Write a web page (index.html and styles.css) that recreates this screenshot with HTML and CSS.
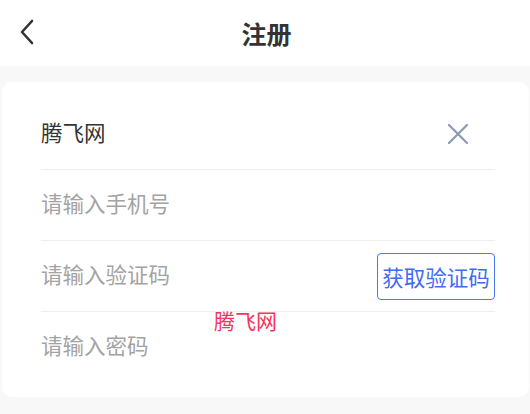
FILE: index.html
```html
<!DOCTYPE html>
<html lang="zh-CN">
<head>
    <meta charset="UTF-8">
    <meta name="viewport" content="width=device-width, initial-scale=1.0">
    <title>注册</title>
    <link rel="stylesheet" href="styles.css">
</head>
<body>
    <div class="header">
        <button class="back" aria-label="返回">
            <svg width="16" height="26" viewBox="0 0 16 26">
                <path d="M13 2 L3 13 L13 24" fill="none" stroke="#333" stroke-width="2.6" stroke-linecap="round" stroke-linejoin="round"/>
            </svg>
        </button>
        <div class="title">注册</div>
    </div>

    <div class="page">
        <div class="card">
            <div class="row">
                <input class="field" type="text" value="腾飞网">
                <button class="clear" aria-label="清除">
                    <svg width="22" height="22" viewBox="0 0 22 22">
                        <path d="M2 2 L20 20 M20 2 L2 20" stroke="#8a99b4" stroke-width="2.2" stroke-linecap="round"/>
                    </svg>
                </button>
            </div>
            <div class="row">
                <input class="field" type="tel" placeholder="请输入手机号">
            </div>
            <div class="row">
                <input class="field" type="text" placeholder="请输入验证码">
                <button class="code-btn">获取验证码</button>
            </div>
            <div class="row">
                <input class="field" type="password" placeholder="请输入密码">
            </div>
        </div>
    </div>

    <div class="watermark">腾飞网</div>
</body>
</html>
```

FILE: styles.css
```css
body {
    margin: 0;
    background-color: #f8f8f8;
    font-family: "Noto Sans CJK SC", "Noto Sans", sans-serif;
    color: #333;
}

.header {
    position: relative;
    height: 66px;
    background: #ffffff;
    display: flex;
    align-items: center;
    justify-content: center;
}

.back {
    position: absolute;
    left: 19px;
    top: 19px;
    padding: 0;
    border: none;
    background: none;
    cursor: pointer;
}

.title {
    font-size: 25px;
    font-weight: bold;
    color: #333;
    margin-left: 3px;
}

.page {
    padding: 16px 1px 17px 2px;
}

.card {
    background: #ffffff;
    border-radius: 10px;
    padding: 17px 34px 15px 39px;
}

.row {
    height: 70px;
    display: flex;
    align-items: center;
    border-bottom: 1px solid #f0f0f2;
}

.row:last-child {
    border-bottom: none;
}

.field {
    flex: 1;
    min-width: 0;
    border: none;
    outline: none;
    padding: 0 0 6px;
    font-family: inherit;
    font-size: 21.5px;
    color: #333;
    background: transparent;
}

.field::placeholder {
    color: #a3a3a3;
}

.clear {
    padding: 0;
    margin-right: 26px;
    border: none;
    background: none;
    display: flex;
    cursor: pointer;
}

.code-btn {
    width: 118px;
    height: 47px;
    padding: 0;
    border: 1.5px solid #4a78f5;
    border-radius: 4px;
    background: #ffffff;
    color: #3d6cf2;
    font-family: inherit;
    font-size: 21.5px;
    cursor: pointer;
}

.watermark {
    position: absolute;
    left: 214px;
    top: 310px;
    font-size: 21px;
    line-height: 1;
    color: #f2365e;
    pointer-events: none;
}
```
